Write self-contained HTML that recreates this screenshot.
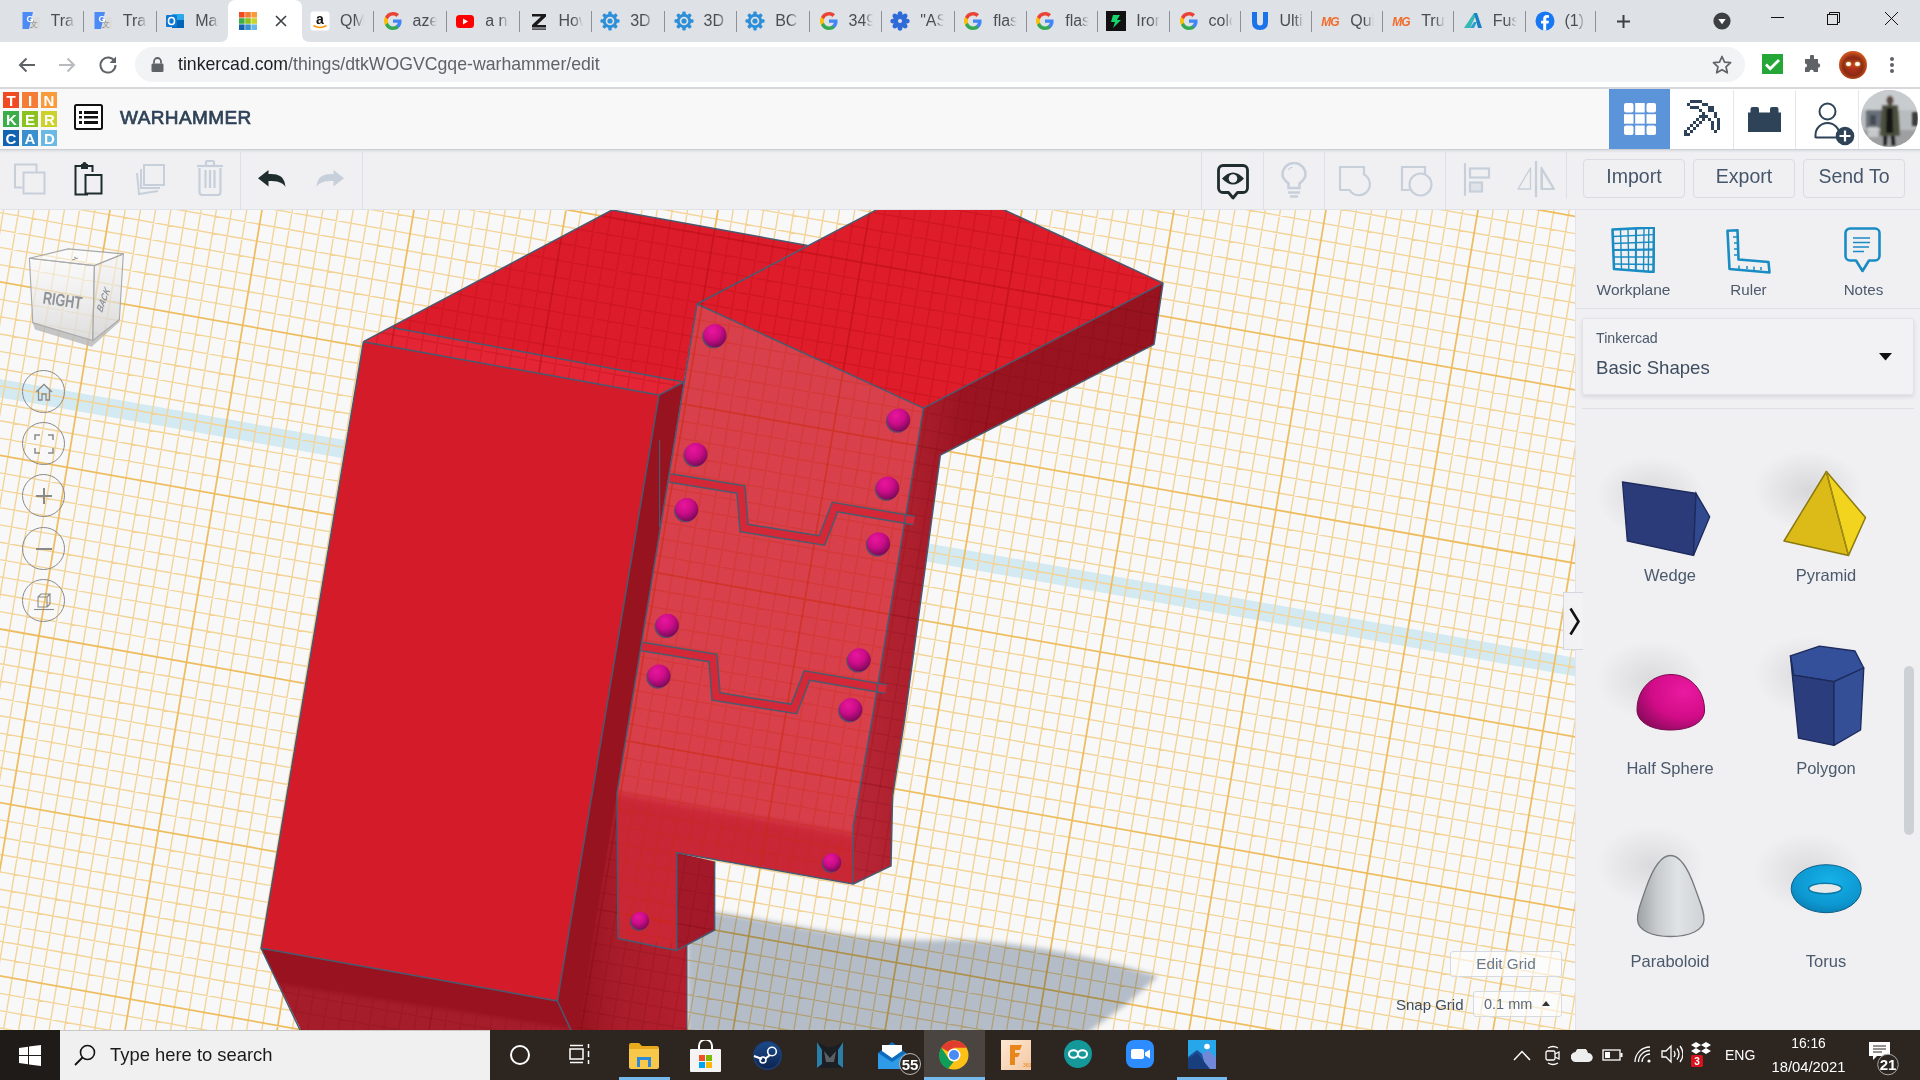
<!DOCTYPE html>
<html><head><meta charset="utf-8">
<style>
*{box-sizing:border-box;margin:0;padding:0}
html,body{width:1920px;height:1080px;overflow:hidden;background:#fff;font-family:"Liberation Sans",sans-serif}
.abs{position:absolute}
svg{display:block}
#tabs{position:absolute;left:0;top:0;width:1920px;height:42px;background:#dee1e6}
#addr{position:absolute;left:0;top:42px;width:1920px;height:45px;background:#fff}
#addrline{position:absolute;left:0;top:87px;width:1920px;height:2px;background:#d6d8dc}
#tch{position:absolute;left:0;top:89px;width:1920px;height:60px;background:#f8f8f8}
#tbar{position:absolute;left:0;top:149px;width:1920px;height:61px;background:#f0f0f3;border-top:1px solid #e1e3e8;border-bottom:1px solid #dfe2e7}
#canvas{position:absolute;left:0;top:210px;width:1575px;height:820px;background:#f8f8f8;overflow:hidden}
#panel{position:absolute;left:1575px;top:210px;width:345px;height:820px;background:#f0f0f3;border-left:1px solid #e2e4e9}
#taskbar{position:absolute;left:0;top:1030px;width:1920px;height:50px;background:#2c2520}
.tabtxt{position:absolute;top:12px;font-size:16px;line-height:18px;color:#4a4e53;white-space:nowrap;overflow:hidden}
.sep{position:absolute;top:11px;width:1px;height:21px;background:#8e9196}
.tsep{position:absolute;top:0;width:1px;height:60px;background:#dde0e6}
.btn{position:absolute;top:9px;height:39px;width:102px;border:1px solid #d9dce2;border-radius:4px;font-size:19.5px;line-height:33px;text-align:center;color:#46566a}
.plabel{position:absolute;font-size:16.5px;color:#4a596b;text-align:center;white-space:nowrap}
.navc{position:absolute;left:22px;width:43px;height:43px;border:1px solid #8a8a8a;border-radius:50%}
</style></head><body>

<!-- ============ CHROME TAB STRIP ============ -->
<div id="tabs">
<div class="abs" style="left:20.5px;top:11px;width:20px;height:20px"><svg width="20" height="20" viewBox="0 0 20 20"><rect x="7" y="6" width="12" height="12" rx="1.5" fill="#dcdcdc"/><text x="13" y="16" font-size="8" fill="#888" text-anchor="middle" font-family="Liberation Sans">文</text><path d="M1.5 1h10.5l-4 17H1.5z" fill="#4c8bf5"/><text x="5.5" y="11" font-size="9" font-weight="bold" fill="#fff" font-family="Liberation Sans">G</text></svg></div>
<div class="tabtxt" style="left:50.5px;width:24px;-webkit-mask-image:linear-gradient(90deg,#000 60%,transparent)">Tracker</div>
<div class="abs" style="left:92.8px;top:11px;width:20px;height:20px"><svg width="20" height="20" viewBox="0 0 20 20"><rect x="7" y="6" width="12" height="12" rx="1.5" fill="#dcdcdc"/><text x="13" y="16" font-size="8" fill="#888" text-anchor="middle" font-family="Liberation Sans">文</text><path d="M1.5 1h10.5l-4 17H1.5z" fill="#4c8bf5"/><text x="5.5" y="11" font-size="9" font-weight="bold" fill="#fff" font-family="Liberation Sans">G</text></svg></div>
<div class="tabtxt" style="left:122.8px;width:24px;-webkit-mask-image:linear-gradient(90deg,#000 60%,transparent)">Tracker</div>
<div class="abs" style="left:165.2px;top:11px;width:20px;height:20px"><svg width="20" height="20" viewBox="0 0 20 20"><rect x="7" y="3" width="12" height="14" rx="1" fill="#28a8ea"/><rect x="7" y="9" width="12" height="8" fill="#0364b8"/><rect x="1" y="4" width="11" height="12" rx="1" fill="#0f78d4"/><ellipse cx="6.5" cy="10" rx="3" ry="3.5" fill="none" stroke="#fff" stroke-width="1.6"/></svg></div>
<div class="tabtxt" style="left:195.2px;width:24px;-webkit-mask-image:linear-gradient(90deg,#000 60%,transparent)">Mail</div>
<div class="abs" style="left:310.1px;top:11px;width:20px;height:20px"><svg width="20" height="20" viewBox="0 0 20 20"><rect x="0.5" y="0.5" width="19" height="19" rx="3" fill="#fff"/><text x="10" y="13" font-size="14" font-weight="bold" text-anchor="middle" fill="#111" font-family="Liberation Sans">a</text><path d="M3.5 14.5q6.5 4 13 0" stroke="#f90" stroke-width="1.6" fill="none"/></svg></div>
<div class="tabtxt" style="left:340.1px;width:24px;-webkit-mask-image:linear-gradient(90deg,#000 60%,transparent)">QMK</div>
<div class="abs" style="left:382.5px;top:11px;width:20px;height:20px"><svg width="20" height="20" viewBox="0 0 20 20"><path d="M18.6 10.2c0-.6-.1-1.2-.2-1.8H10v3.4h4.8a4.1 4.1 0 0 1-1.8 2.7v2.2h2.9c1.7-1.6 2.7-3.9 2.7-6.5z" fill="#4285f4"/><path d="M10 19c2.4 0 4.5-.8 5.9-2.2L13 14.5c-.8.5-1.8.9-3 .9-2.3 0-4.3-1.6-5-3.7H2v2.3A9 9 0 0 0 10 19z" fill="#34a853"/><path d="M5 11.7a5.4 5.4 0 0 1 0-3.4V6H2a9 9 0 0 0 0 8z" fill="#fbbc05"/><path d="M10 4.6c1.3 0 2.5.5 3.4 1.3l2.6-2.6A9 9 0 0 0 2 6l3 2.3c.7-2.1 2.7-3.7 5-3.7z" fill="#ea4335"/></svg></div>
<div class="tabtxt" style="left:412.5px;width:24px;-webkit-mask-image:linear-gradient(90deg,#000 60%,transparent)">azerty</div>
<div class="abs" style="left:455.2px;top:11px;width:20px;height:20px"><svg width="20" height="20" viewBox="0 0 20 20"><rect x="1" y="4" width="18" height="13" rx="3.5" fill="#f00"/><path d="M8 7.5v6l5-3z" fill="#fff"/></svg></div>
<div class="tabtxt" style="left:485.2px;width:24px;-webkit-mask-image:linear-gradient(90deg,#000 60%,transparent)">a nice</div>
<div class="abs" style="left:528.5px;top:11px;width:20px;height:20px"><svg width="20" height="20" viewBox="0 0 20 20"><path d="M3 3h14v2.5L8 14h9v2.5H3V14l9-8.5H3z" fill="#1a1a1a"/><rect x="3" y="17.5" width="14" height="1.2" fill="#1a1a1a"/></svg></div>
<div class="tabtxt" style="left:558.5px;width:24px;-webkit-mask-image:linear-gradient(90deg,#000 60%,transparent)">How</div>
<div class="abs" style="left:600.2px;top:11px;width:20px;height:20px"><svg width="20" height="20" viewBox="0 0 20 20"><g fill="#2d8fd8"><circle cx="10" cy="10" r="7.2"/><rect x="8.3" y="0.5" width="3.4" height="19" rx="1"/><rect x="0.5" y="8.3" width="19" height="3.4" rx="1"/><rect x="8.3" y="0.5" width="3.4" height="19" rx="1" transform="rotate(45 10 10)"/><rect x="8.3" y="0.5" width="3.4" height="19" rx="1" transform="rotate(-45 10 10)"/></g><circle cx="10" cy="10" r="4.3" fill="#dee1e6"/><circle cx="10" cy="10" r="2.6" fill="#2d8fd8"/></svg></div>
<div class="tabtxt" style="left:630.2px;width:24px;-webkit-mask-image:linear-gradient(90deg,#000 60%,transparent)">3D</div>
<div class="abs" style="left:673.5px;top:11px;width:20px;height:20px"><svg width="20" height="20" viewBox="0 0 20 20"><g fill="#2d8fd8"><circle cx="10" cy="10" r="7.2"/><rect x="8.3" y="0.5" width="3.4" height="19" rx="1"/><rect x="0.5" y="8.3" width="19" height="3.4" rx="1"/><rect x="8.3" y="0.5" width="3.4" height="19" rx="1" transform="rotate(45 10 10)"/><rect x="8.3" y="0.5" width="3.4" height="19" rx="1" transform="rotate(-45 10 10)"/></g><circle cx="10" cy="10" r="4.3" fill="#dee1e6"/><circle cx="10" cy="10" r="2.6" fill="#2d8fd8"/></svg></div>
<div class="tabtxt" style="left:703.5px;width:24px;-webkit-mask-image:linear-gradient(90deg,#000 60%,transparent)">3D</div>
<div class="abs" style="left:745.2px;top:11px;width:20px;height:20px"><svg width="20" height="20" viewBox="0 0 20 20"><g fill="#2d8fd8"><circle cx="10" cy="10" r="7.2"/><rect x="8.3" y="0.5" width="3.4" height="19" rx="1"/><rect x="0.5" y="8.3" width="19" height="3.4" rx="1"/><rect x="8.3" y="0.5" width="3.4" height="19" rx="1" transform="rotate(45 10 10)"/><rect x="8.3" y="0.5" width="3.4" height="19" rx="1" transform="rotate(-45 10 10)"/></g><circle cx="10" cy="10" r="4.3" fill="#dee1e6"/><circle cx="10" cy="10" r="2.6" fill="#2d8fd8"/></svg></div>
<div class="tabtxt" style="left:775.2px;width:24px;-webkit-mask-image:linear-gradient(90deg,#000 60%,transparent)">BCN</div>
<div class="abs" style="left:818.5px;top:11px;width:20px;height:20px"><svg width="20" height="20" viewBox="0 0 20 20"><path d="M18.6 10.2c0-.6-.1-1.2-.2-1.8H10v3.4h4.8a4.1 4.1 0 0 1-1.8 2.7v2.2h2.9c1.7-1.6 2.7-3.9 2.7-6.5z" fill="#4285f4"/><path d="M10 19c2.4 0 4.5-.8 5.9-2.2L13 14.5c-.8.5-1.8.9-3 .9-2.3 0-4.3-1.6-5-3.7H2v2.3A9 9 0 0 0 10 19z" fill="#34a853"/><path d="M5 11.7a5.4 5.4 0 0 1 0-3.4V6H2a9 9 0 0 0 0 8z" fill="#fbbc05"/><path d="M10 4.6c1.3 0 2.5.5 3.4 1.3l2.6-2.6A9 9 0 0 0 2 6l3 2.3c.7-2.1 2.7-3.7 5-3.7z" fill="#ea4335"/></svg></div>
<div class="tabtxt" style="left:848.5px;width:24px;-webkit-mask-image:linear-gradient(90deg,#000 60%,transparent)">349</div>
<div class="abs" style="left:890.2px;top:11px;width:20px;height:20px"><svg width="20" height="20" viewBox="0 0 20 20"><g fill="#2f6bd8"><ellipse cx="10" cy="4.5" rx="2.6" ry="4.2" transform="rotate(0 10 10)"/><ellipse cx="10" cy="4.5" rx="2.6" ry="4.2" transform="rotate(45 10 10)"/><ellipse cx="10" cy="4.5" rx="2.6" ry="4.2" transform="rotate(90 10 10)"/><ellipse cx="10" cy="4.5" rx="2.6" ry="4.2" transform="rotate(135 10 10)"/><ellipse cx="10" cy="4.5" rx="2.6" ry="4.2" transform="rotate(180 10 10)"/><ellipse cx="10" cy="4.5" rx="2.6" ry="4.2" transform="rotate(225 10 10)"/><ellipse cx="10" cy="4.5" rx="2.6" ry="4.2" transform="rotate(270 10 10)"/><ellipse cx="10" cy="4.5" rx="2.6" ry="4.2" transform="rotate(315 10 10)"/></g><circle cx="10" cy="10" r="2" fill="#dee1e6"/></svg></div>
<div class="tabtxt" style="left:920.2px;width:24px;-webkit-mask-image:linear-gradient(90deg,#000 60%,transparent)">"ASK</div>
<div class="abs" style="left:963.2px;top:11px;width:20px;height:20px"><svg width="20" height="20" viewBox="0 0 20 20"><path d="M18.6 10.2c0-.6-.1-1.2-.2-1.8H10v3.4h4.8a4.1 4.1 0 0 1-1.8 2.7v2.2h2.9c1.7-1.6 2.7-3.9 2.7-6.5z" fill="#4285f4"/><path d="M10 19c2.4 0 4.5-.8 5.9-2.2L13 14.5c-.8.5-1.8.9-3 .9-2.3 0-4.3-1.6-5-3.7H2v2.3A9 9 0 0 0 10 19z" fill="#34a853"/><path d="M5 11.7a5.4 5.4 0 0 1 0-3.4V6H2a9 9 0 0 0 0 8z" fill="#fbbc05"/><path d="M10 4.6c1.3 0 2.5.5 3.4 1.3l2.6-2.6A9 9 0 0 0 2 6l3 2.3c.7-2.1 2.7-3.7 5-3.7z" fill="#ea4335"/></svg></div>
<div class="tabtxt" style="left:993.2px;width:24px;-webkit-mask-image:linear-gradient(90deg,#000 60%,transparent)">flash</div>
<div class="abs" style="left:1035.2px;top:11px;width:20px;height:20px"><svg width="20" height="20" viewBox="0 0 20 20"><path d="M18.6 10.2c0-.6-.1-1.2-.2-1.8H10v3.4h4.8a4.1 4.1 0 0 1-1.8 2.7v2.2h2.9c1.7-1.6 2.7-3.9 2.7-6.5z" fill="#4285f4"/><path d="M10 19c2.4 0 4.5-.8 5.9-2.2L13 14.5c-.8.5-1.8.9-3 .9-2.3 0-4.3-1.6-5-3.7H2v2.3A9 9 0 0 0 10 19z" fill="#34a853"/><path d="M5 11.7a5.4 5.4 0 0 1 0-3.4V6H2a9 9 0 0 0 0 8z" fill="#fbbc05"/><path d="M10 4.6c1.3 0 2.5.5 3.4 1.3l2.6-2.6A9 9 0 0 0 2 6l3 2.3c.7-2.1 2.7-3.7 5-3.7z" fill="#ea4335"/></svg></div>
<div class="tabtxt" style="left:1065.2px;width:24px;-webkit-mask-image:linear-gradient(90deg,#000 60%,transparent)">flash</div>
<div class="abs" style="left:1106.2px;top:11px;width:20px;height:20px"><svg width="20" height="20" viewBox="0 0 20 20"><rect x="0" y="0" width="20" height="20" fill="#111"/><path d="M7 4h7l-3 5h4l-8 8 2-6H5z" fill="#17d46b"/></svg></div>
<div class="tabtxt" style="left:1136.2px;width:24px;-webkit-mask-image:linear-gradient(90deg,#000 60%,transparent)">Iron</div>
<div class="abs" style="left:1178.5px;top:11px;width:20px;height:20px"><svg width="20" height="20" viewBox="0 0 20 20"><path d="M18.6 10.2c0-.6-.1-1.2-.2-1.8H10v3.4h4.8a4.1 4.1 0 0 1-1.8 2.7v2.2h2.9c1.7-1.6 2.7-3.9 2.7-6.5z" fill="#4285f4"/><path d="M10 19c2.4 0 4.5-.8 5.9-2.2L13 14.5c-.8.5-1.8.9-3 .9-2.3 0-4.3-1.6-5-3.7H2v2.3A9 9 0 0 0 10 19z" fill="#34a853"/><path d="M5 11.7a5.4 5.4 0 0 1 0-3.4V6H2a9 9 0 0 0 0 8z" fill="#fbbc05"/><path d="M10 4.6c1.3 0 2.5.5 3.4 1.3l2.6-2.6A9 9 0 0 0 2 6l3 2.3c.7-2.1 2.7-3.7 5-3.7z" fill="#ea4335"/></svg></div>
<div class="tabtxt" style="left:1208.5px;width:24px;-webkit-mask-image:linear-gradient(90deg,#000 60%,transparent)">color</div>
<div class="abs" style="left:1249.5px;top:11px;width:20px;height:20px"><svg width="20" height="20" viewBox="0 0 20 20"><path d="M2 1h5v10q0 3.5 3 3.5t3-3.5V1h5v10q0 8-8 8t-8-8z" fill="#1a73e8"/></svg></div>
<div class="tabtxt" style="left:1279.5px;width:24px;-webkit-mask-image:linear-gradient(90deg,#000 60%,transparent)">Ultim</div>
<div class="abs" style="left:1320.2px;top:11px;width:20px;height:20px"><svg width="20" height="20" viewBox="0 0 20 20"><text x="10" y="15" font-size="12" font-weight="bold" font-style="italic" text-anchor="middle" fill="#f26c2a" font-family="Liberation Sans" letter-spacing="-1">MG</text></svg></div>
<div class="tabtxt" style="left:1350.2px;width:24px;-webkit-mask-image:linear-gradient(90deg,#000 60%,transparent)">Quick</div>
<div class="abs" style="left:1391.2px;top:11px;width:20px;height:20px"><svg width="20" height="20" viewBox="0 0 20 20"><text x="10" y="15" font-size="12" font-weight="bold" font-style="italic" text-anchor="middle" fill="#f26c2a" font-family="Liberation Sans" letter-spacing="-1">MG</text></svg></div>
<div class="tabtxt" style="left:1421.2px;width:24px;-webkit-mask-image:linear-gradient(90deg,#000 60%,transparent)">True</div>
<div class="abs" style="left:1462.8px;top:11px;width:20px;height:20px"><svg width="20" height="20" viewBox="0 0 20 20"><path d="M1 17L11 2h3L7 17z" fill="#36b8b4"/><path d="M11 2h3l5 15h-4z" fill="#1b7fc4"/><path d="M7 17l4-6h3l-3 6z" fill="#2aa0d0"/></svg></div>
<div class="tabtxt" style="left:1492.8px;width:24px;-webkit-mask-image:linear-gradient(90deg,#000 60%,transparent)">Fusion</div>
<div class="abs" style="left:1534.5px;top:11px;width:20px;height:20px"><svg width="20" height="20" viewBox="0 0 20 20"><circle cx="10" cy="10" r="9.5" fill="#1877f2"/><path d="M11.2 19.5v-7h2.3l.4-2.8h-2.7V8c0-.8.3-1.3 1.4-1.3H14V4.2a18 18 0 0 0-2.2-.1c-2.2 0-3.6 1.3-3.6 3.7v1.9H6v2.8h2.2v7z" fill="#fff"/></svg></div>
<div class="tabtxt" style="left:1564.5px;width:20px;-webkit-mask-image:linear-gradient(90deg,#000 60%,transparent)">(1) Fa</div>
<div class="sep" style="left:83.3px"></div>
<div class="sep" style="left:155.7px"></div>
<div class="sep" style="left:373.0px"></div>
<div class="sep" style="left:445.7px"></div>
<div class="sep" style="left:519.0px"></div>
<div class="sep" style="left:590.7px"></div>
<div class="sep" style="left:664.0px"></div>
<div class="sep" style="left:735.7px"></div>
<div class="sep" style="left:809.0px"></div>
<div class="sep" style="left:880.7px"></div>
<div class="sep" style="left:953.7px"></div>
<div class="sep" style="left:1025.7px"></div>
<div class="sep" style="left:1096.7px"></div>
<div class="sep" style="left:1169.0px"></div>
<div class="sep" style="left:1240.0px"></div>
<div class="sep" style="left:1310.7px"></div>
<div class="sep" style="left:1381.7px"></div>
<div class="sep" style="left:1453.3px"></div>
<div class="sep" style="left:1525.0px"></div>
<div class="sep" style="left:1595.3px"></div>
<svg class="abs" style="left:220px;top:0" width="90" height="42" viewBox="0 0 90 42"><path d="M0 42q8 0 8-8V8q0-8 8-8h58q8 0 8 8v26q0 8 8 8z" fill="#fff"/></svg>
<div class="abs" style="left:238px;top:11px;width:20px;height:20px"><svg width="20" height="20" viewBox="0 0 20 20"><rect x="1.0" y="1.0" width="5.6" height="5.6" fill="#f04a23"/><rect x="7.2" y="1.0" width="5.6" height="5.6" fill="#f57c35"/><rect x="13.4" y="1.0" width="5.6" height="5.6" fill="#f99a3b"/><rect x="1.0" y="7.2" width="5.6" height="5.6" fill="#3cae49"/><rect x="7.2" y="7.2" width="5.6" height="5.6" fill="#8cc21f"/><rect x="13.4" y="7.2" width="5.6" height="5.6" fill="#ccd22b"/><rect x="1.0" y="13.4" width="5.6" height="5.6" fill="#1162b0"/><rect x="7.2" y="13.4" width="5.6" height="5.6" fill="#3a8fcf"/><rect x="13.4" y="13.4" width="5.6" height="5.6" fill="#6ab9e5"/></svg></div>
<svg class="abs" style="left:275px;top:15px" width="12" height="12" viewBox="0 0 12 12"><path d="M1 1l10 10M11 1L1 11" stroke="#3c4043" stroke-width="1.6"/></svg>
<svg class="abs" style="left:1616px;top:14px" width="15" height="15" viewBox="0 0 15 15"><path d="M7.5 1v13M1 7.5h13" stroke="#3c4043" stroke-width="2"/></svg>
<svg class="abs" style="left:1713px;top:12px" width="18" height="18" viewBox="0 0 18 18"><circle cx="9" cy="9" r="8.6" fill="#3c4043"/><path d="M5.3 7h7.4L9 12.2z" fill="#fff"/></svg>
<div class="abs" style="left:1771px;top:17px;width:13px;height:1px;background:#111"></div>
<svg class="abs" style="left:1826px;top:11px" width="15" height="15" viewBox="0 0 15 15"><path d="M3.5 3.5V1.5h10v10h-2" stroke="#111" fill="none" stroke-width="1"/><rect x="1.5" y="3.5" width="10" height="10" stroke="#111" fill="none" stroke-width="1"/></svg>
<svg class="abs" style="left:1884px;top:11px" width="15" height="15" viewBox="0 0 15 15"><path d="M1 1l13 13M14 1L1 14" stroke="#111" stroke-width="1"/></svg>
</div>

<!-- ============ ADDRESS BAR ============ -->
<div id="addr">
<svg class="abs" style="left:17px;top:13px" width="20" height="20" viewBox="0 0 20 20"><path d="M18 10H3M9.5 3.5L3 10l6.5 6.5" stroke="#5f6368" stroke-width="2" fill="none"/></svg>
<svg class="abs" style="left:57px;top:13px" width="20" height="20" viewBox="0 0 20 20"><path d="M2 10h15M10.5 3.5L17 10l-6.5 6.5" stroke="#b7babe" stroke-width="2" fill="none"/></svg>
<svg class="abs" style="left:97px;top:12px" width="22" height="22" viewBox="0 0 22 22"><path d="M17.6 7.5A7.5 7.5 0 1 0 18.5 11" stroke="#5f6368" stroke-width="2" fill="none"/><path d="M19 2.5v6.5h-6.5z" fill="#5f6368"/></svg>
<div class="abs" style="left:135px;top:5px;width:1610px;height:35px;border-radius:17.5px;background:#f1f3f4"></div>
<svg class="abs" style="left:151px;top:15px" width="13" height="15" viewBox="0 0 13 15"><path d="M3 6.5V4.5a3.5 3.5 0 0 1 7 0v2" stroke="#5f6368" stroke-width="1.8" fill="none"/><rect x="0.5" y="6.5" width="12" height="8.5" rx="1.3" fill="#5f6368"/></svg>
<div class="abs" style="left:178px;top:11px;font-size:17.7px;line-height:22px;color:#202124;white-space:nowrap">tinkercad.com<span style="color:#5f6368">/things/dtkWOGVCgqe-warhammer/edit</span></div>
<svg class="abs" style="left:1712px;top:13px" width="20" height="19" viewBox="0 0 20 19"><path d="M10 1.5l2.5 5.6 6.1.6-4.6 4.1 1.3 6-5.3-3.1-5.3 3.1 1.3-6L1.4 7.7l6.1-.6z" stroke="#5f6368" stroke-width="1.7" fill="none" stroke-linejoin="round"/></svg>
<div class="abs" style="left:1762px;top:12px;width:21px;height:20px;background:#25a738"></div>
<svg class="abs" style="left:1762px;top:12px" width="21" height="20" viewBox="0 0 21 20"><path d="M4 10.5l4.2 4.2L17 6" stroke="#fff" stroke-width="2.8" fill="none"/></svg>
<svg class="abs" style="left:1803px;top:13px" width="19" height="19" viewBox="0 0 19 19"><path d="M7 1.5a2 2 0 0 1 4 0V4h4v4.3a2.2 2.2 0 1 1 0 4.4V17h-4.2a2.2 2.2 0 1 0-4.4 0H2v-4.5a2 2 0 1 0 0-4V4h5z" fill="#5f6368"/></svg>
<div class="abs" style="left:1839px;top:9px;width:28px;height:28px;border-radius:50%;background:radial-gradient(circle at 50% 55%,#c2321a 0%,#8a2a14 45%,#d0561e 70%,#6a2010 100%)"></div>
<div class="abs" style="left:1846px;top:20px;width:5px;height:4px;border-radius:50%;background:#fff;box-shadow:0 0 3px #ff5"></div>
<div class="abs" style="left:1855px;top:20px;width:5px;height:4px;border-radius:50%;background:#fff;box-shadow:0 0 3px #ff5"></div>
<div class="abs" style="left:1890px;top:15px;width:4px;height:4px;border-radius:50%;background:#5f6368;box-shadow:0 6px 0 #5f6368,0 12px 0 #5f6368"></div>
</div>
<div id="addrline"></div>

<!-- ============ TINKERCAD HEADER ============ -->
<div id="tch">
<svg class="abs" style="left:3px;top:3px" width="54" height="54" viewBox="0 0 54 54">
<rect x="0" y="0" width="16" height="16" fill="#f04a23"/><rect x="19" y="0" width="16" height="16" fill="#f57c35"/><rect x="38" y="0" width="16" height="16" fill="#f99a3b"/>
<rect x="0" y="19" width="16" height="16" fill="#3cae49"/><rect x="19" y="19" width="16" height="16" fill="#8cc21f"/><rect x="38" y="19" width="16" height="16" fill="#ccd22b"/>
<rect x="0" y="38" width="16" height="16" fill="#1162b0"/><rect x="19" y="38" width="16" height="16" fill="#3a8fcf"/><rect x="38" y="38" width="16" height="16" fill="#6ab9e5"/>
<g font-family="Liberation Sans" font-weight="bold" font-size="15" fill="#fff" text-anchor="middle">
<text x="8" y="13.5">T</text><text x="27" y="13.5">I</text><text x="46" y="13.5">N</text>
<text x="8.3" y="32.5">K</text><text x="27" y="32.5">E</text><text x="46.3" y="32.5">R</text>
<text x="8" y="51.5">C</text><text x="27" y="51.5">A</text><text x="46.3" y="51.5">D</text></g></svg>
<svg class="abs" style="left:74px;top:15px" width="29" height="26" viewBox="0 0 29 26"><rect x="1" y="1" width="27" height="24" rx="1.5" stroke="#111" stroke-width="2" fill="#fff"/><g fill="#111"><rect x="5" y="7" width="3" height="3"/><rect x="10" y="7" width="14" height="3"/><rect x="5" y="12" width="3" height="2.5"/><rect x="10" y="12" width="14" height="2.5"/><rect x="5" y="17" width="3" height="3"/><rect x="10" y="17" width="14" height="3"/></g></svg>
<div class="abs" style="left:120px;top:17px;font-size:19px;line-height:24px;font-weight:normal;letter-spacing:0.4px;color:#2f4257;-webkit-text-stroke:0.7px #2f4257">WARHAMMER</div>
<div class="abs" style="left:1609px;top:0;width:311px;height:60px;background:#fff"></div>
<div class="abs" style="left:1609px;top:0;width:61px;height:60px;background:#5b94d9"></div>
<svg class="abs" style="left:1624px;top:14px" width="32" height="32" viewBox="0 0 32 32"><g fill="#fff"><rect x="0" y="0" width="9.5" height="9.5" rx="2"/><rect x="11.2" y="0" width="9.5" height="9.5"/><rect x="22.5" y="0" width="9.5" height="9.5" rx="2"/><rect x="0" y="11.2" width="9.5" height="9.5"/><rect x="11.2" y="11.2" width="9.5" height="9.5"/><rect x="22.5" y="11.2" width="9.5" height="9.5"/><rect x="0" y="22.5" width="9.5" height="9.5" rx="2"/><rect x="11.2" y="22.5" width="9.5" height="9.5"/><rect x="22.5" y="22.5" width="9.5" height="9.5" rx="2"/></g></svg>
<svg class="abs" style="left:1683.6px;top:11.4px" width="36" height="36" viewBox="0 0 36 36"><g fill="#2f4358"><rect x="6" y="0" width="3" height="3"/><rect x="9" y="0" width="3" height="3"/><rect x="12" y="0" width="3" height="3"/><rect x="15" y="0" width="3" height="3"/><rect x="3" y="3" width="3" height="3"/><rect x="18" y="3" width="3" height="3"/><rect x="21" y="3" width="3" height="3"/><rect x="6" y="6" width="3" height="3"/><rect x="9" y="6" width="3" height="3"/><rect x="12" y="6" width="3" height="3"/><rect x="24" y="6" width="3" height="3"/><rect x="27" y="6" width="3" height="3"/><rect x="15" y="9" width="3" height="3"/><rect x="24" y="9" width="3" height="3"/><rect x="27" y="9" width="3" height="3"/><rect x="18" y="12" width="3" height="3"/><rect x="30" y="12" width="3" height="3"/><rect x="15" y="15" width="3" height="3"/><rect x="18" y="15" width="3" height="3"/><rect x="21" y="15" width="3" height="3"/><rect x="30" y="15" width="3" height="3"/><rect x="12" y="18" width="3" height="3"/><rect x="18" y="18" width="3" height="3"/><rect x="24" y="18" width="3" height="3"/><rect x="33" y="18" width="3" height="3"/><rect x="9" y="21" width="3" height="3"/><rect x="15" y="21" width="3" height="3"/><rect x="27" y="21" width="3" height="3"/><rect x="33" y="21" width="3" height="3"/><rect x="6" y="24" width="3" height="3"/><rect x="12" y="24" width="3" height="3"/><rect x="27" y="24" width="3" height="3"/><rect x="33" y="24" width="3" height="3"/><rect x="3" y="27" width="3" height="3"/><rect x="9" y="27" width="3" height="3"/><rect x="27" y="27" width="3" height="3"/><rect x="33" y="27" width="3" height="3"/><rect x="0" y="30" width="3" height="3"/><rect x="6" y="30" width="3" height="3"/><rect x="30" y="30" width="3" height="3"/><rect x="0" y="33" width="3" height="3"/><rect x="3" y="33" width="3" height="3"/></g></svg>
<div class="abs" style="left:1733px;top:1px;width:1px;height:59px;background:#e4e6ea"></div>
<svg class="abs" style="left:1748px;top:106.5px;top:17.5px" width="33" height="25" viewBox="0 0 33 25"><path d="M0 5.5h2.5V2a2 2 0 0 1 2-2h4.5a2 2 0 0 1 2 2v3.5h11V2a2 2 0 0 1 2-2h4.5a2 2 0 0 1 2 2v3.5H33V25H0z" fill="#2f4358"/></svg>
<div class="abs" style="left:1795px;top:1px;width:1px;height:59px;background:#e4e6ea"></div>
<svg class="abs" style="left:1814px;top:13px" width="42" height="45" viewBox="0 0 42 45"><circle cx="13.5" cy="9.5" r="8" stroke="#2f4358" stroke-width="2" fill="none"/><path d="M1.5 36v-3a12 12 0 0 1 24 0" stroke="#2f4358" stroke-width="2" fill="none"/><path d="M1.5 35.5h22" stroke="#2f4358" stroke-width="2"/><circle cx="31" cy="34" r="9.3" fill="#2f4358"/><path d="M31 28.5v11M25.5 34h11" stroke="#fff" stroke-width="2.2"/></svg>
<div class="abs" style="left:1858px;top:1px;width:1px;height:59px;background:#e4e6ea"></div>
<svg class="abs" style="left:1861px;top:1px" width="57" height="57" viewBox="1861 90 57 57"><defs><clipPath id="avc"><circle cx="1889.5" cy="118.5" r="28.5"/></clipPath><filter id="avb"><feGaussianBlur stdDeviation="0.9"/></filter></defs>
<g clip-path="url(#avc)"><rect x="1861" y="90" width="57" height="57" fill="#b9bcbf"/>
<g filter="url(#avb)"><rect x="1861" y="90" width="57" height="20" fill="#c9ccce"/><rect x="1861" y="130" width="57" height="17" fill="#9d9fa1"/>
<rect x="1866" y="110" width="18" height="18" fill="#6a7078"/><rect x="1870" y="115" width="6" height="10" fill="#454b55"/><rect x="1868" y="127" width="10" height="10" fill="#d8dadc" opacity=".7"/>
<rect x="1912" y="112" width="6" height="14" fill="#3a3a3a"/>
<ellipse cx="1890" cy="100.5" rx="3.6" ry="4.8" fill="#5a4a42"/>
<path d="M1882 105h16l2 31h-20z" fill="#4c503c"/><path d="M1886.5 108h6l.8 25h-7.5z" fill="#141414"/>
<path d="M1883 136h4.5l-.5 10h-4zM1890.5 136h4.5l.5 10h-4z" fill="#151515"/></g></g></svg>
</div>

<!-- ============ TOOLBAR ============ -->
<div id="tbar">
<div class="abs" style="left:0;top:-1px;width:1920px;height:4px;background:linear-gradient(rgba(40,50,70,.13),rgba(40,50,70,0))"></div>
<svg class="abs" style="left:14px;top:13px" width="32" height="32" viewBox="0 0 32 32"><g stroke="#c7d0da" stroke-width="2" fill="none"><path d="M8.5 24.5H1V1.5h21.5V9"/><rect x="9.5" y="9.5" width="21" height="21"/></g></svg>
<svg class="abs" style="left:74px;top:12px" width="29" height="34" viewBox="0 0 29 34"><g stroke="#1f2d2f" stroke-width="2" fill="none"><path d="M12 32.5H1.5V4h5.5"/><path d="M13.5 4h5v6"/><rect x="11.5" y="13" width="16" height="18.5"/><path d="M12 32.5h2"/></g><path d="M7 2h7v5H7z" fill="#1f2d2f"/><circle cx="10.5" cy="2.2" r="2.2" fill="#1f2d2f"/></svg>
<svg class="abs" style="left:133px;top:12px" width="34" height="35" viewBox="0 0 34 35"><g stroke="#c7d0da" stroke-width="2" fill="none"><rect x="11" y="3" width="20" height="20"/><path d="M8 7v19h19"/><path d="M4 11l2 21 19-3"/></g></svg>
<svg class="abs" style="left:196px;top:10px" width="28" height="36" viewBox="0 0 28 36"><g stroke="#c7d0da" stroke-width="2.2" fill="none"><path d="M1 6h26"/><path d="M10 5V2.5a1.5 1.5 0 0 1 1.5-1.5h5a1.5 1.5 0 0 1 1.5 1.5V5"/><path d="M3.5 8v24a3 3 0 0 0 3 3h15a3 3 0 0 0 3-3V8"/><path d="M9.5 10v18M14 10v18M18.5 10v18"/></g></svg>
<div class="tsep" style="left:240px"></div>
<svg class="abs" style="left:258px;top:20px" width="28" height="17" viewBox="0 0 28 17"><path d="M10.5 0v4c9 0 16 1 17 13-3-5-8-6-17-6v5.5L0 8.2z" fill="#1f2d2f"/></svg>
<svg class="abs" style="left:316px;top:20px" width="28" height="17" viewBox="0 0 28 17"><path d="M17.5 0v4C8.5 4 1.5 5 .5 17c3-5 8-6 17-6v5.5L28 8.2z" fill="#c7d0da"/></svg>
<div class="tsep" style="left:362px"></div>
<div class="tsep" style="left:1201px"></div>
<svg class="abs" style="left:1217px;top:14px" width="32" height="36" viewBox="0 0 32 36"><path d="M6 1.5h20a4.5 4.5 0 0 1 4.5 4.5v18a4.5 4.5 0 0 1-4.5 4.5h-5.5L16 34l-4.5-5.5H6A4.5 4.5 0 0 1 1.5 24V6A4.5 4.5 0 0 1 6 1.5z" stroke="#1f2d2f" stroke-width="2.8" fill="none" stroke-linejoin="round"/><path d="M5 14.5q11-12 22 0q-11 12-22 0z" fill="#1f2d2f"/><circle cx="16" cy="14.5" r="4.3" fill="#f0f0f3"/></svg>
<div class="tsep" style="left:1263px"></div>
<svg class="abs" style="left:1280px;top:12px" width="28" height="38" viewBox="-1 -1 28 38"><g stroke="#c7d0da" stroke-width="2.6" fill="none"><path d="M7.5 25v-4.5C3 17 1.5 14 1.5 11.5a11.5 11.5 0 0 1 23 0c0 2.5-1.5 5.5-6 9V25z"/><path d="M7 29.5h12M9 33.5h8"/><path d="M7 7q2-2.5 4.5-2.8" stroke-width="1.2"/></g></svg>
<div class="tsep" style="left:1324px"></div>
<svg class="abs" style="left:1338px;top:15px" width="34" height="33" viewBox="0 0 34 33"><path d="M2 2h24v7.5a11 11 0 1 1-14.5 15.5H2z" stroke="#c7d0da" stroke-width="2.2" fill="none" stroke-linejoin="round"/></svg>
<svg class="abs" style="left:1400px;top:15px" width="34" height="33" viewBox="0 0 34 33"><g stroke="#c7d0da" stroke-width="2.2" fill="none"><path d="M9.5 25H2V2h23v7"/><circle cx="20.5" cy="19.5" r="11"/></g></svg>
<div class="tsep" style="left:1445px"></div>
<svg class="abs" style="left:1463px;top:12px" width="28" height="35" viewBox="0 0 28 35"><g stroke="#c7d0da" fill="none"><path d="M2 2v31" stroke-width="2.2" stroke-linecap="round"/><rect x="7" y="6.5" width="19" height="9" stroke-width="2.2"/><rect x="7" y="20.5" width="12" height="9" stroke-width="2.2" fill="#dfe3e8"/></g></svg>
<svg class="abs" style="left:1516px;top:10px" width="40" height="38" viewBox="0 0 40 38"><g fill="none" stroke="#c7d0da" stroke-linejoin="round"><path d="M20 2v34" stroke-width="2.4" stroke-linecap="round"/><path d="M14.5 8v21H2z" stroke-width="1.4"/><path d="M25.5 8v21H38z" stroke-width="2.2" fill="#c7d0da"/></g><path d="M27 13v15h9z" fill="#f0f0f3"/></svg>
<div class="tsep" style="left:1566px;height:49px"></div>
<div class="btn" style="left:1583px">Import</div>
<div class="btn" style="left:1693px">Export</div>
<div class="btn" style="left:1803px">Send To</div>
</div>

<!-- ============ CANVAS ============ -->
<div id="canvas">
<svg class="abs" style="left:0;top:0" width="1575" height="820" viewBox="0 210 1575 820">
<defs>
<path id="gmin" d="M-41.9 -246.0L-272.5 1135.5M-27.1 -243.3L-257.8 1138.1M-12.3 -240.7L-243.0 1140.8M2.4 -238.1L-228.3 1143.4M17.2 -235.4L-213.5 1146.0M46.7 -230.1L-184.0 1151.3M61.5 -227.5L-169.2 1153.9M76.2 -224.9L-154.5 1156.6M91.0 -222.2L-139.7 1159.2M105.7 -219.6L-124.9 1161.9M120.5 -217.0L-110.2 1164.5M135.2 -214.3L-95.4 1167.1M150.0 -211.7L-80.7 1169.8M164.8 -209.1L-65.9 1172.4M194.3 -203.8L-36.4 1177.7M209.1 -201.1L-21.6 1180.3M223.8 -198.5L-6.9 1182.9M238.6 -195.9L7.9 1185.6M253.3 -193.2L22.7 1188.2M268.1 -190.6L37.4 1190.9M282.8 -188.0L52.2 1193.5M297.6 -185.3L66.9 1196.1M312.4 -182.7L81.7 1198.8M341.9 -177.4L111.2 1204.0M356.6 -174.8L126.0 1206.7M371.4 -172.2L140.7 1209.3M386.2 -169.5L155.5 1211.9M400.9 -166.9L170.3 1214.6M415.7 -164.2L185.0 1217.2M430.4 -161.6L199.8 1219.8M445.2 -159.0L214.5 1222.5M460.0 -156.3L229.3 1225.1M489.5 -151.1L258.8 1230.4M504.2 -148.4L273.6 1233.0M519.0 -145.8L288.3 1235.7M533.8 -143.2L303.1 1238.3M548.5 -140.5L317.9 1240.9M563.3 -137.9L332.6 1243.6M578.0 -135.2L347.4 1246.2M592.8 -132.6L362.1 1248.8M607.6 -130.0L376.9 1251.5M637.1 -124.7L406.4 1256.8M651.9 -122.1L421.2 1259.4M666.6 -119.4L435.9 1262.0M681.4 -116.8L450.7 1264.7M696.1 -114.2L465.5 1267.3M710.9 -111.5L480.2 1269.9M725.6 -108.9L495.0 1272.6M740.4 -106.3L509.7 1275.2M755.2 -103.6L524.5 1277.8M784.7 -98.3L554.0 1283.1M799.4 -95.7L568.8 1285.7M814.2 -93.1L583.5 1288.4M829.0 -90.4L598.3 1291.0M843.7 -87.8L613.1 1293.7M858.5 -85.2L627.8 1296.3M873.2 -82.5L642.6 1298.9M888.0 -79.9L657.3 1301.6M902.8 -77.3L672.1 1304.2M932.3 -72.0L701.6 1309.5M947.0 -69.3L716.4 1312.1M961.8 -66.7L731.1 1314.7M976.6 -64.1L745.9 1317.4M991.3 -61.4L760.7 1320.0M1006.1 -58.8L775.4 1322.7M1020.8 -56.2L790.2 1325.3M1035.6 -53.5L804.9 1327.9M1050.4 -50.9L819.7 1330.6M1079.9 -45.6L849.2 1335.8M1094.7 -43.0L864.0 1338.5M1109.4 -40.4L878.7 1341.1M1124.2 -37.7L893.5 1343.7M1138.9 -35.1L908.3 1346.4M1153.7 -32.4L923.0 1349.0M1168.5 -29.8L937.8 1351.6M1183.2 -27.2L952.5 1354.3M1198.0 -24.5L967.3 1356.9M1227.5 -19.3L996.8 1362.2M1242.3 -16.6L1011.6 1364.8M1257.0 -14.0L1026.3 1367.5M1271.8 -11.4L1041.1 1370.1M1286.5 -8.7L1055.9 1372.7M1301.3 -6.1L1070.6 1375.4M1316.1 -3.4L1085.4 1378.0M1330.8 -0.8L1100.1 1380.6M1345.6 1.8L1114.9 1383.3M1375.1 7.1L1144.4 1388.6M1389.9 9.7L1159.2 1391.2M1404.6 12.4L1173.9 1393.8M1419.4 15.0L1188.7 1396.5M1434.1 17.6L1203.5 1399.1M1448.9 20.3L1218.2 1401.7M1463.7 22.9L1233.0 1404.4M1478.4 25.5L1247.7 1407.0M1493.2 28.2L1262.5 1409.6M1522.7 33.5L1292.0 1414.9M1537.5 36.1L1306.8 1417.5M1552.2 38.7L1321.5 1420.2M1567.0 41.4L1336.3 1422.8M1581.7 44.0L1351.1 1425.5M1596.5 46.6L1365.8 1428.1M1611.3 49.3L1380.6 1430.7M1626.0 51.9L1395.3 1433.4M1640.8 54.5L1410.1 1436.0M1670.3 59.8L1439.6 1441.3M1685.1 62.5L1454.4 1443.9M1699.8 65.1L1469.1 1446.5M1714.6 67.7L1483.9 1449.2M1729.3 70.4L1498.7 1451.8M1744.1 73.0L1513.4 1454.5M1758.9 75.6L1528.2 1457.1M1773.6 78.3L1542.9 1459.7M1788.4 80.9L1557.7 1462.4M1817.9 86.2L1587.2 1467.6M1832.7 88.8L1602.0 1470.3M1847.4 91.4L1616.7 1472.9M1862.2 94.1L1631.5 1475.5M-44.7 -229.1L1874.1 113.6M-47.5 -212.3L1871.3 130.4M-50.3 -195.4L1868.5 147.3M-53.1 -178.6L1865.7 164.1M-55.9 -161.7L1862.9 181.0M-58.7 -144.9L1860.1 197.8M-61.6 -128.0L1857.2 214.6M-64.4 -111.2L1854.4 231.5M-67.2 -94.3L1851.6 248.3M-72.8 -60.6L1846.0 282.0M-75.6 -43.8L1843.2 298.9M-78.4 -26.9L1840.4 315.7M-81.3 -10.1L1837.5 332.6M-84.1 6.7L1834.7 349.4M-86.9 23.6L1831.9 366.3M-89.7 40.4L1829.1 383.1M-92.5 57.3L1826.3 400.0M-95.3 74.1L1823.5 416.8M-100.9 107.8L1817.9 450.5M-103.8 124.7L1815.0 467.4M-106.6 141.5L1812.2 484.2M-109.4 158.4L1809.4 501.0M-112.2 175.2L1806.6 517.9M-115.0 192.1L1803.8 534.7M-117.8 208.9L1801.0 551.6M-120.6 225.8L1798.2 568.4M-123.4 242.6L1795.4 585.3M-129.1 276.3L1789.7 619.0M-131.9 293.1L1786.9 635.8M-134.7 310.0L1784.1 652.7M-137.5 326.8L1781.3 669.5M-140.3 343.7L1778.5 686.4M-143.1 360.5L1775.7 703.2M-146.0 377.4L1772.8 720.1M-148.8 394.2L1770.0 736.9M-151.6 411.1L1767.2 753.8M-157.2 444.8L1761.6 787.4M-160.0 461.6L1758.8 804.3M-162.8 478.5L1756.0 821.1M-165.6 495.3L1753.2 838.0M-168.5 512.2L1750.3 854.8M-171.3 529.0L1747.5 871.7M-174.1 545.8L1744.7 888.5M-176.9 562.7L1741.9 905.4M-179.7 579.5L1739.1 922.2M-185.3 613.2L1733.5 955.9M-188.1 630.1L1730.7 972.8M-191.0 646.9L1727.8 989.6M-193.8 663.8L1725.0 1006.5M-196.6 680.6L1722.2 1023.3M-199.4 697.5L1719.4 1040.2M-202.2 714.3L1716.6 1057.0M-205.0 731.2L1713.8 1073.8M-207.8 748.0L1711.0 1090.7M-213.5 781.7L1705.3 1124.4M-216.3 798.6L1702.5 1141.2M-219.1 815.4L1699.7 1158.1M-221.9 832.2L1696.9 1174.9M-224.7 849.1L1694.1 1191.8M-227.5 865.9L1691.3 1208.6M-230.3 882.8L1688.5 1225.5M-233.2 899.6L1685.6 1242.3M-236.0 916.5L1682.8 1259.2M-241.6 950.2L1677.2 1292.9M-244.4 967.0L1674.4 1309.7M-247.2 983.9L1671.6 1326.6M-250.0 1000.7L1668.8 1343.4M-252.8 1017.6L1666.0 1360.2M-255.7 1034.4L1663.1 1377.1M-258.5 1051.3L1660.3 1393.9M-261.3 1068.1L1657.5 1410.8M-264.1 1085.0L1654.7 1427.6M-269.7 1118.6L1649.1 1461.3"/><path id="gmaj" d="M31.9 -232.8L-198.7 1148.7M179.5 -206.4L-51.1 1175.0M327.1 -180.1L96.5 1201.4M474.7 -153.7L244.1 1227.8M622.3 -127.3L391.7 1254.1M769.9 -101.0L539.3 1280.5M917.5 -74.6L686.9 1306.8M1065.1 -48.3L834.5 1333.2M1212.7 -21.9L982.1 1359.6M1360.3 4.5L1129.7 1385.9M1507.9 30.8L1277.3 1412.3M1655.5 57.2L1424.9 1438.6M1803.1 83.5L1572.5 1465.0M-41.9 -246.0L1876.9 96.7M-70.0 -77.5L1848.8 265.2M-98.1 91.0L1820.7 433.7M-126.3 259.4L1792.5 602.1M-154.4 427.9L1764.4 770.6M-182.5 596.4L1736.3 939.1M-210.7 764.9L1708.1 1107.5M-238.8 933.3L1680.0 1276.0M-266.9 1101.8L1651.9 1444.5"/>
<radialGradient id="stud" cx="0.38" cy="0.3" r="0.75"><stop offset="0" stop-color="#e8169c"/><stop offset="0.5" stop-color="#cc0c88"/><stop offset="1" stop-color="#720a55"/></radialGradient>
<linearGradient id="rside" x1="853" y1="0" x2="1163" y2="0" gradientUnits="userSpaceOnUse"><stop offset="0" stop-color="#b82636"/><stop offset="0.2" stop-color="#ac1f2d"/><stop offset="0.36" stop-color="#9a1421"/><stop offset="1" stop-color="#96131f"/></linearGradient>
<linearGradient id="pside" x1="0" y1="0" x2="1" y2="0"><stop offset="0" stop-color="#ba2838"/><stop offset="1" stop-color="#9e1826"/></linearGradient>
<linearGradient id="bface" x1="420" y1="950" x2="410.9" y2="1010" gradientUnits="userSpaceOnUse"><stop offset="0" stop-color="#98121f"/><stop offset="0.86" stop-color="#98121f"/><stop offset="0.95" stop-color="#a41c2a"/><stop offset="1" stop-color="#a51d2b"/></linearGradient>
<linearGradient id="legg" x1="577" y1="0" x2="687" y2="0" gradientUnits="userSpaceOnUse"><stop offset="0" stop-color="#97131f"/><stop offset="0.35" stop-color="#a81c2a"/><stop offset="1" stop-color="#b41f2e"/></linearGradient>
<linearGradient id="plateg" x1="620" y1="700" x2="602.6" y2="800" gradientUnits="userSpaceOnUse"><stop offset="0" stop-color="#d8404c"/><stop offset="0.86" stop-color="#d63e4a"/><stop offset="0.95" stop-color="#cc2a3a"/><stop offset="1" stop-color="#c92636"/></linearGradient>
<filter id="blur2" x="-5%" y="-5%" width="110%" height="110%"><feGaussianBlur stdDeviation="2.5"/></filter>
<clipPath id="facesclip">
<path d="M697 304L923.5 408.1L872 720L853.2 826.5L853.2 884L676.7 852.7L676.7 950.4L618 938.5L617 793Z"/>
</clipPath>
<clipPath id="topclip"><path d="M612 210L807.6 245.4L697 304L683.8 382L659 395.1L363.4 341.7Z"/><path d="M697 304L876.6 210L1004.2 210L1163 283.1L923.5 408.1Z"/></clipPath>
<clipPath id="sideclip"><path d="M923.5 408.1L1163 283.1L1154 344.3L940.4 455L904.6 720L892.6 795.8L891 865.9L853.2 884L853.2 826.5L872 720Z"/><path d="M676.7 852.7L714.6 861.5L714.6 930L676.7 950.4Z"/><path d="M617 793L618 938.5L687 945L687 1030L577 1030Z"/><path d="M280.7 985.4L571.8 1029.7L571.8 1032L301 1032Z"/></clipPath>
</defs>
<!-- workplane blue band -->
<path d="M0 379L1575 657.8L1575 676.3L0 397.5Z" fill="#d3eaf2"/>
<!-- grid -->
<use href="#gmin" stroke="#f3d396" stroke-width="1.35" fill="none"/>
<use href="#gmaj" stroke="#eebd60" stroke-width="1.75" fill="none"/>
<!-- shadow -->
<path d="M687 1034L687 926L714 912C790 922 860 944 951 940C1010 940 1090 955 1158 976L1128 1003L1086 1034Z" fill="#b9c2cd" filter="url(#blur2)" style="mix-blend-mode:multiply"/>

<!-- ===== OBJECT ===== -->
<!-- dark strip + leg -->
<path d="M659 395.1L683.8 382L617 793L618 938.5L687 945L687 1030L571.8 1030L557.4 1001Z" fill="url(#legg)"/>
<path d="M659 395.1L683.8 382L617 793L577 1030L571.8 1030L557.4 1001Z" fill="#97131f"/>
<!-- left block top face -->
<path d="M612 210L807.6 245.4L697 304L683.8 382L659 395.1L363.4 341.7Z" fill="#dd1c2b"/>
<path d="M392 327.4L683.8 382L659 395.1L363.4 341.7Z" fill="#e42535"/>
<!-- left block front -->
<path d="M363.4 341.7L659 395.1L557.4 1001L261.1 948.3Z" fill="#d31b29"/>
<!-- left block bottom -->
<path d="M261.1 948.3L557.4 1001L571.8 1030L301 1030Z" fill="url(#bface)"/>
<!-- right block top -->
<path d="M697 304L876.6 210L1004.2 210L1163 283.1L923.5 408.1Z" fill="#de1c2a"/>
<!-- right block side + plate side -->
<path d="M923.5 408.1L1163 283.1L1154 344.3L940.4 455L904.6 720L892.6 795.8L891 865.9L853.2 884L853.2 826.5L872 720Z" fill="url(#rside)"/>
<!-- plate front -->
<path d="M697 304L923.5 408.1L872 720L853.2 826.5L853.2 884L676.7 852.7L676.7 950.4L618 938.5L617 793Z" fill="url(#plateg)"/>
<!-- notch side -->
<path d="M676.7 852.7L714.6 861.5L714.6 930L676.7 950.4Z" fill="#a3192a"/>

<!-- grid texture on faces -->
<g clip-path="url(#facesclip)">
<use href="#gmin" stroke="#cc2a0c" stroke-width="1.3" fill="none" opacity="0.3"/>
<use href="#gmaj" stroke="#cc2a0c" stroke-width="1.7" fill="none" opacity="0.55"/>
</g>
<g clip-path="url(#topclip)">
<use href="#gmin" stroke="#b40a10" stroke-width="1.3" fill="none" opacity="0.3"/>
<use href="#gmaj" stroke="#b40a10" stroke-width="1.7" fill="none" opacity="0.5"/>
</g>
<g clip-path="url(#sideclip)">
<use href="#gmin" stroke="#7a0a10" stroke-width="1.2" fill="none" opacity="0.2"/>
<use href="#gmaj" stroke="#7a0a10" stroke-width="1.5" fill="none" opacity="0.32"/>
</g>

<!-- slots -->
<g fill="none" stroke-linejoin="miter">
<path d="M670 478L741 489.5L744 528L822 540.5L835 507L914 520.5" stroke="#4b5a6c" stroke-width="10"/>
<path d="M670 478L741 489.5L744 528L822 540.5L835 507L914 520.5" stroke="#d42838" stroke-width="7"/>
<g transform="translate(-28 168.5)">
<path d="M670 478L741 489.5L744 528L822 540.5L835 507L914 520.5" stroke="#4b5a6c" stroke-width="10"/>
<path d="M670 478L741 489.5L744 528L822 540.5L835 507L914 520.5" stroke="#d42838" stroke-width="7"/>
</g>
</g>

<!-- edges -->
<g fill="none" stroke="#485a70" stroke-width="1.5" stroke-linejoin="round">
<path d="M363.4 341.7L612 210L807.6 245.4"/>
<path d="M363.4 341.7L659 395.1L683.8 382"/>
<path d="M392 327.4L683.8 382"/>
<path d="M363.4 341.7L261.1 948.3L557.4 1001L659 395.1"/>
<path d="M261.1 948.3L301 1032M557.4 1001L571.8 1032"/>
<path d="M697 304L880 208M1000 208L1163 283.1L1154 344.3L940.4 455"/>
<path d="M923.5 408.1L1163 283.1"/>
<path d="M697 304L923.5 408.1M940.4 455L904.6 720L892.6 795.8L891 865.9L853.2 884"/>
<path d="M697 304L617 793L618 938.5L676.7 950.4L676.7 852.7L853.2 884L853.2 826.5L872 720L923.5 408.1"/>
<path d="M676.7 950.4L714.6 930L714.6 861.5"/>
<path d="M687 945L687 1032" stroke-width="1"/>
<path d="M659.6 440L659.6 527" stroke-width="1.2"/>
</g>

<!-- studs -->
<g fill="#4b4a6e" opacity="0.85"><circle cx="713.7" cy="336.8" r="11.5"/><circle cx="897.4" cy="421.3" r="11.5"/><circle cx="694.7" cy="455.6" r="11.5"/><circle cx="685.5" cy="510.8" r="11.5"/><circle cx="886.4" cy="489.3" r="11.5"/><circle cx="877.3" cy="545.0" r="11.5"/><circle cx="666.1" cy="626.6" r="11.5"/><circle cx="657.8" cy="677.2" r="11.5"/><circle cx="857.9" cy="661.1" r="11.5"/><circle cx="849.6" cy="710.9" r="11.5"/><circle cx="830.7" cy="863.7" r="9.3"/><circle cx="638.9" cy="922.0" r="9"/></g>
<g fill="url(#stud)">
<circle cx="715" cy="335.5" r="11.5"/><circle cx="898.7" cy="420" r="11.5"/>
<circle cx="696" cy="454.3" r="11.5"/><circle cx="686.8" cy="509.5" r="11.5"/>
<circle cx="887.7" cy="488" r="11.5"/><circle cx="878.6" cy="543.7" r="11.5"/>
<circle cx="667.4" cy="625.3" r="11.5"/><circle cx="659.1" cy="675.9" r="11.5"/>
<circle cx="859.2" cy="659.8" r="11.5"/><circle cx="850.9" cy="709.6" r="11.5"/>
<circle cx="832" cy="862.4" r="9.3"/><circle cx="640.2" cy="920.7" r="9"/>
</g>
</svg>

<svg class="abs" style="left:25px;top:35px" width="105" height="115" viewBox="25 245 105 115">
<defs><linearGradient id="cubef" x1="0" y1="0" x2="0" y2="1"><stop offset="0" stop-color="#fafafa" stop-opacity=".55"/><stop offset="1" stop-color="#d8d8d8" stop-opacity=".85"/></linearGradient>
<linearGradient id="cubes" x1="0" y1="0" x2="0" y2="1"><stop offset="0" stop-color="#f4f4f4" stop-opacity=".5"/><stop offset="1" stop-color="#d2d2d2" stop-opacity=".85"/></linearGradient></defs>
<path d="M35 329.4L91.7 346.7L119.4 322L119.4 319.4L92.8 340.6L32.8 322.8Z" fill="#b8b8b8" opacity=".8"/>
<path d="M29.4 258.3L94.4 265.6L92.8 340.6L32.8 322.8Z" fill="url(#cubef)" stroke="#a8a8a8" stroke-width="1.1"/>
<path d="M94.4 265.6L123.3 253.9L119.4 319.4L92.8 340.6Z" fill="url(#cubes)" stroke="#a8a8a8" stroke-width="1.1"/>
<path d="M29.4 258.3L68.3 248.9L123.3 253.9L94.4 265.6Z" fill="#fbfbfb" fill-opacity=".5" stroke="#a8a8a8" stroke-width="1.1"/>
<text x="42.2" y="303.5" font-family="Liberation Sans" font-weight="bold" font-size="17.5" fill="#8e9398" transform="rotate(8 42.2 303.5)" textLength="39.5" lengthAdjust="spacingAndGlyphs">RIGHT</text>
<text x="0" y="0" font-family="Liberation Sans" font-weight="bold" font-style="italic" font-size="9.5" fill="#8e9398" transform="translate(102 313) rotate(-70) skewX(-15)" textLength="24" lengthAdjust="spacingAndGlyphs">BACK</text>
<path d="M72 260l6-2M74 257l2 1" stroke="#999" stroke-width="1"/>
</svg>
<div class="navc" style="top:160px"></div>
<svg class="abs" style="left:33px;top:171px" width="22" height="22" viewBox="0 0 22 22"><path d="M3 11L11 3.5 19 11M5.5 9v10h3.5v-6h4v6h3.5V9" stroke="#8a8a8a" stroke-width="1.3" fill="none"/></svg>
<div class="navc" style="top:212px"></div>
<svg class="abs" style="left:33px;top:223px" width="22" height="22" viewBox="0 0 22 22"><path d="M2 7V2h5M15 2h5v5M20 15v5h-5M7 20H2v-5" stroke="#8a8a8a" stroke-width="1.5" fill="none"/></svg>
<div class="navc" style="top:264px"></div>
<svg class="abs" style="left:33px;top:275px" width="22" height="22" viewBox="0 0 22 22"><path d="M11 3v16M3 11h16" stroke="#8a8a8a" stroke-width="2" fill="none"/></svg>
<div class="navc" style="top:317px"></div>
<svg class="abs" style="left:33px;top:328px" width="22" height="22" viewBox="0 0 22 22"><path d="M3 11h16" stroke="#8a8a8a" stroke-width="2" fill="none"/></svg>
<div class="navc" style="top:369px"></div>
<svg class="abs" style="left:32px;top:379px" width="24" height="24" viewBox="0 0 24 24"><g stroke="#8a8a8a" stroke-width="1.1" fill="none"><path d="M6 8h9v10H6zM6 8l3-3h9l-3 3M18 5v10l-3 3"/><path d="M2 20.5h20"/></g></svg>
<div class="abs" style="left:1450px;top:741px;width:112px;height:26px;border:1px solid #d6dbe2;border-radius:3px;background:rgba(255,255,255,.55);font-size:15.3px;line-height:24px;color:#6b7b8b;text-align:center">Edit Grid</div>
<div class="abs" style="left:1396px;top:786px;font-size:15px;line-height:18px;color:#3e4e60">Snap Grid</div>
<div class="abs" style="left:1473px;top:781px;width:89px;height:26px;border:1px solid #d6dbe2;border-radius:3px;background:rgba(255,255,255,.55);font-size:14.5px;line-height:24px;color:#5b6b7b;padding-left:10px">0.1 mm</div>
<svg class="abs" style="left:1542px;top:791px" width="8" height="5" viewBox="0 0 8 5"><path d="M0 5h8L4 0z" fill="#333"/></svg>


</div>

<!-- ============ RIGHT PANEL ============ -->
<div id="panel">
<svg class="abs" style="left:35px;top:17px" width="44" height="46" viewBox="0 0 44 46"><g stroke="#1a8cc4" fill="none"><path d="M1.5 2.5L43 0.5L42.5 45L3 42z" stroke-width="2.6" stroke-linejoin="round"/><g stroke-width="1.4"><path d="M9.5 2.2L10.5 42.5M17 1.8L17.8 43M25 1.5L24.8 43.5M33 1.2L32.5 44M37.8 1L37.3 44.5"/><path d="M2 9.5L42.8 7.6M2.2 16.5L42.8 15M2.4 23L42.7 22.5M2.6 30L42.7 30M2.8 37L42.6 37.5"/></g><path d="M25 1.5L24.8 43.5M2.4 23L42.7 22.5" stroke-width="2"/></g></svg>
<div class="plabel" style="left:20px;top:71px;width:75px;font-size:15.5px">Workplane</div>
<svg class="abs" style="left:150px;top:19px" width="45" height="45" viewBox="0 0 45 45"><g stroke="#1a8cc4" fill="none" stroke-linejoin="round"><path d="M1.5 1.8L11.5 1.3L12.5 30.5L42.5 33L43.5 43.5L3.5 40z" stroke-width="2.6"/><path d="M7 8h4M8 14h3M8 20h3.5M8 26h3M13 36.5V41M21 37v3M28 37.5v3.5M35 38v3" stroke-width="1.5"/></g></svg>
<div class="plabel" style="left:140px;top:71px;width:65px;font-size:15.2px">Ruler</div>
<svg class="abs" style="left:268px;top:17px" width="37" height="46" viewBox="0 0 37 46"><path d="M6 1.5h25a4.5 4.5 0 0 1 4.5 4.5v23a4.5 4.5 0 0 1-4.5 4.5h-6L18.5 44 12 33.5H6A4.5 4.5 0 0 1 1.5 29V6A4.5 4.5 0 0 1 6 1.5z" stroke="#1a8cc4" stroke-width="2.6" fill="none" stroke-linejoin="round"/><path d="M9 11h17M9 15.5h17M9 20h16M9 24.5h11" stroke="#1a8cc4" stroke-width="1.6"/></svg>
<div class="plabel" style="left:255px;top:71px;width:65px;font-size:15.2px">Notes</div>
<div class="abs" style="left:0;top:98px;width:345px;height:1px;background:#dcdfe4"></div>
<div class="abs" style="left:6px;top:108px;width:332px;height:77px;border:1px solid #e1e3e8;border-radius:3px;background:#f2f2f5;box-shadow:0 2px 4px rgba(0,0,0,.10)"></div>
<div class="abs" style="left:20px;top:120px;font-size:14.2px;color:#4a596b">Tinkercad</div>
<div class="abs" style="left:20px;top:147px;font-size:18.6px;color:#3e4e60">Basic Shapes</div>
<svg class="abs" style="left:303px;top:143px" width="13" height="8" viewBox="0 0 13 8"><path d="M0 0h13L6.5 7.5z" fill="#111"/></svg>
<div class="abs" style="left:6px;top:198px;width:332px;height:1px;background:#dcdfe4"></div>
<!-- shapes -->
<div class="abs" style="left:20px;top:246px;width:110px;height:80px;border-radius:50%;background:radial-gradient(closest-side,rgba(0,0,0,.10),rgba(0,0,0,0))"></div>
<div class="abs" style="left:177px;top:240px;width:110px;height:80px;border-radius:50%;background:radial-gradient(closest-side,rgba(0,0,0,.10),rgba(0,0,0,0))"></div>
<svg class="abs" style="left:40px;top:265px" width="100" height="100" viewBox="1615 475 100 100"><path d="M1621.5 482L1695 493.3L1692.5 555.4L1626.3 540.9Z" fill="#2b3a78" stroke="#1e2a5c" stroke-width="1.3"/><path d="M1695 493.3L1708.7 516.7L1692.5 555.4Z" fill="#30498f" stroke="#1e2a5c" stroke-width="1.3"/></svg>
<div class="plabel" style="left:44px;top:356px;width:100px">Wedge</div>
<svg class="abs" style="left:200px;top:255px" width="100" height="100" viewBox="1775 465 100 100"><path d="M1825.4 471.5L1783 541L1847.5 555.4Z" fill="#dcbb18" stroke="#8a7a10" stroke-width="1.5" stroke-linejoin="round"/><path d="M1825.4 471.5L1864.5 517.5L1847.5 555.4Z" fill="#f2d41e" stroke="#8a7a10" stroke-width="1.5" stroke-linejoin="round"/><path d="M1825.4 471.5L1847.5 555.4" stroke="#a89212" stroke-width="1"/></svg>
<div class="plabel" style="left:200px;top:356px;width:100px">Pyramid</div>
<div class="abs" style="left:20px;top:430px;width:110px;height:80px;border-radius:50%;background:radial-gradient(closest-side,rgba(0,0,0,.09),rgba(0,0,0,0))"></div>
<div class="abs" style="left:177px;top:425px;width:110px;height:80px;border-radius:50%;background:radial-gradient(closest-side,rgba(0,0,0,.09),rgba(0,0,0,0))"></div>
<svg class="abs" style="left:55px;top:460px" width="80" height="65" viewBox="1630 670 80 65"><path d="M1636 710C1636 688 1652 674.5 1670 674.5C1689 674.5 1704 690 1703.5 711C1703 722 1690 730 1669 730C1650 730 1636 722 1636 710Z" fill="url(#hsg)" stroke="#7a0a50" stroke-width="1"/><defs><radialGradient id="hsg" cx="0.7" cy="0.3" r="0.8"><stop offset="0" stop-color="#ea1aa0"/><stop offset="0.6" stop-color="#d20c88"/><stop offset="1" stop-color="#8e0a5e"/></radialGradient></defs></svg>
<div class="plabel" style="left:44px;top:549px;width:100px">Half Sphere</div>
<svg class="abs" style="left:210px;top:432px" width="80" height="105" viewBox="1785 642 80 105"><path d="M1789.4 655.8L1818.5 646.1L1854 651L1862.8 668L1833 681.7L1792.6 675.2Z" fill="#34509a" stroke="#1c2a5a" stroke-width="1.3" stroke-linejoin="round"/><path d="M1792.6 675.2L1833 681.7L1833 745.4L1797.5 738.2L1789.4 655.8Z" fill="#2b3d7c" stroke="#1c2a5a" stroke-width="1.3" stroke-linejoin="round"/><path d="M1833 681.7L1862.8 668L1859.6 730L1833 745.4Z" fill="#344f95" stroke="#1c2a5a" stroke-width="1.3" stroke-linejoin="round"/></svg>
<div class="plabel" style="left:200px;top:549px;width:100px">Polygon</div>
<div class="abs" style="left:20px;top:615px;width:110px;height:80px;border-radius:50%;background:radial-gradient(closest-side,rgba(0,0,0,.09),rgba(0,0,0,0))"></div>
<div class="abs" style="left:177px;top:622px;width:110px;height:80px;border-radius:50%;background:radial-gradient(closest-side,rgba(0,0,0,.09),rgba(0,0,0,0))"></div>
<svg class="abs" style="left:55px;top:640px" width="80" height="90" viewBox="1630 850 80 90"><path d="M1669.5 855.5C1660 855.5 1652 868 1645 888C1639 905 1636 913 1636.5 920C1637 930 1650 936.5 1669.5 936.5C1689 936.5 1702.5 930 1703 920C1703.5 912 1700 905 1694 888C1687 868 1679 855.5 1669.5 855.5Z" fill="url(#pbg)" stroke="#767a7c" stroke-width="1.3"/><defs><linearGradient id="pbg" x1="0" y1="0" x2="1" y2="0"><stop offset="0" stop-color="#9ea2a4"/><stop offset="0.3" stop-color="#c8cccd"/><stop offset="0.6" stop-color="#dfe3e5"/><stop offset="1" stop-color="#cfd3d5"/></linearGradient></defs></svg>
<div class="plabel" style="left:44px;top:742px;width:100px">Paraboloid</div>
<svg class="abs" style="left:210px;top:650px" width="80" height="55" viewBox="1785 860 80 55"><ellipse cx="1825.2" cy="888.7" rx="35" ry="24" fill="url(#tg)" stroke="#0a5f88" stroke-width="1"/><ellipse cx="1824.2" cy="888.5" rx="16.5" ry="5.2" fill="#e6e8ea" stroke="#087aa8" stroke-width="1.5"/><defs><radialGradient id="tg" cx="0.55" cy="0.35" r="0.7"><stop offset="0" stop-color="#16b2ea"/><stop offset="0.7" stop-color="#0d97d0"/><stop offset="1" stop-color="#0a7cb0"/></radialGradient></defs></svg>
<div class="plabel" style="left:200px;top:742px;width:100px">Torus</div>
<div class="abs" style="left:328px;top:456px;width:10px;height:169px;border-radius:5px;background:#cdd0d5"></div>

</div>

<div class="abs" style="left:1563px;top:592px;width:20px;height:58px;border:1px solid #d4d8de;border-right:none;background:#f2f2f4"></div>
<svg class="abs" style="left:1569px;top:607px" width="11" height="29" viewBox="0 0 11 29"><path d="M1.5 1.5L9.5 14.5 1.5 27.5" stroke="#111" stroke-width="2.6" fill="none"/></svg>
<!-- ============ TASKBAR ============ -->
<div id="taskbar">
<div class="abs" style="left:0;top:0;width:60px;height:50px;background:#1f1b18"></div>
<svg class="abs" style="left:19px;top:15px" width="22" height="21" viewBox="0 0 22 21"><path d="M0 3l9-1.3V10H0zM10 1.5L22 0v10H10zM0 11h9v8.3L0 18zM10 11h12v10l-12-1.6z" fill="#fff"/></svg>
<div class="abs" style="left:60px;top:0;width:430px;height:50px;background:#f0f0f0;border-top:1px solid #c8c8c8"></div>
<svg class="abs" style="left:74px;top:14px" width="22" height="22" viewBox="0 0 22 22"><circle cx="13.5" cy="8.5" r="7" stroke="#111" stroke-width="1.6" fill="none"/><path d="M8.5 13.5L1 21" stroke="#111" stroke-width="1.8"/></svg>
<div class="abs" style="left:110px;top:13px;font-size:18.4px;line-height:24px;color:#1b1b1b">Type here to search</div>
<div class="abs" style="left:510px;top:15px;width:20px;height:20px;border-radius:50%;border:2.6px solid #fff"></div>
<svg class="abs" style="left:569px;top:13px" width="22" height="22" viewBox="0 0 22 22"><g stroke="#fff" stroke-width="1.5" fill="none"><rect x="1" y="6" width="13" height="10"/><path d="M1 2.5h13M1 19.5h13M19.5 1v4M19.5 8v6M19.5 17v4"/></g></svg>
<svg class="abs" style="left:629px;top:13px" width="30" height="26" viewBox="0 0 30 26"><path d="M0 2a2 2 0 0 1 2-2h8l3 3h15a2 2 0 0 1 2 2v3H0z" fill="#e8a91c"/><path d="M0 6h30v18a2 2 0 0 1-2 2H2a2 2 0 0 1-2-2z" fill="#f7c84a"/><rect x="8" y="14" width="14" height="10" fill="#2c8ad8"/><rect x="11" y="17" width="8" height="7" fill="#f7c84a"/></svg>
<div class="abs" style="left:619px;top:47px;width:51px;height:3px;background:#76b9ed"></div>
<svg class="abs" style="left:690px;top:10px" width="31" height="32" viewBox="0 0 31 32"><path d="M9 9V6a6.5 6.5 0 0 1 13 0v3" stroke="#fff" stroke-width="2" fill="none"/><rect x="0" y="9" width="31" height="23" rx="1" fill="#f4f4f4"/><rect x="9" y="15" width="6" height="6" fill="#f25022"/><rect x="16" y="15" width="6" height="6" fill="#7fba00"/><rect x="9" y="22" width="6" height="6" fill="#00a4ef"/><rect x="16" y="22" width="6" height="6" fill="#ffb900"/></svg>
<svg class="abs" style="left:753px;top:11px" width="29" height="29" viewBox="0 0 29 29"><circle cx="14.5" cy="14.5" r="14.5" fill="#1b3e74"/><circle cx="14.5" cy="14.5" r="13" fill="url(#stg)"/><defs><linearGradient id="stg" x1="0" y1="0" x2="0" y2="1"><stop offset="0" stop-color="#1a4a8a"/><stop offset="1" stop-color="#0e2450"/></linearGradient></defs><circle cx="19" cy="10.5" r="4.3" stroke="#fff" stroke-width="1.6" fill="none"/><circle cx="10" cy="19" r="3" stroke="#fff" stroke-width="1.5" fill="none"/><path d="M1 15l8 3M12 18l5-4" stroke="#fff" stroke-width="2.2"/></svg>
<svg class="abs" style="left:814px;top:9px" width="32" height="32" viewBox="0 0 32 32"><path d="M3 3l10 5h6l10-5v26H3z" fill="#1b1e22"/><path d="M3 3l5 8v14l-5 4z" fill="#2b7fa6"/><path d="M29 3l-5 8v14l5 4z" fill="#2b7fa6"/><path d="M10 12l6 7 6-7-2 11h-8z" fill="#5b6066"/></svg>
<svg class="abs" style="left:876px;top:9px" width="45" height="36" viewBox="0 0 45 36"><path d="M2 14L16 3l14 11v16H2z" fill="#0f6cbd"/><path d="M2 14l14 9 14-9v16H2z" fill="#2e9ae8"/><path d="M6 12V6h20v6l-10 7z" fill="#fff"/><circle cx="34" cy="25" r="10.5" fill="#2c2520" stroke="#bbb" stroke-width="1"/><text x="34" y="31" font-size="15" font-weight="bold" fill="#fff" text-anchor="middle" font-family="Liberation Sans">55</text></svg>
<div class="abs" style="left:924px;top:0;width:61px;height:50px;background:#4a4541"></div>
<svg class="abs" style="left:939px;top:10px" width="30" height="30" viewBox="0 0 30 30"><circle cx="15" cy="15" r="14.5" fill="#fbc116"/><path d="M15 .5A14.5 14.5 0 0 1 27.6 7.7H15z" fill="#e33b2e"/><path d="M2.4 7.8A14.5 14.5 0 0 1 15 .5V8.5A6.5 6.5 0 0 0 9.4 11.8z" fill="#e33b2e"/><path d="M2.4 7.8L9.4 18.2A6.5 6.5 0 0 0 15 21.5L8.8 29A14.5 14.5 0 0 1 2.4 7.8z" fill="#109d58"/><circle cx="15" cy="15" r="6.5" fill="#fff"/><circle cx="15" cy="15" r="5" fill="#4a8af4"/></svg>
<div class="abs" style="left:924px;top:47px;width:61px;height:3px;background:#76b9ed"></div>
<div class="abs" style="left:1001px;top:10px;width:30px;height:30px;background:linear-gradient(135deg,#fde8d2,#f3c9a4)"></div>
<svg class="abs" style="left:1001px;top:10px" width="30" height="30" viewBox="0 0 30 30"><path d="M9 5h12l-2 5h-5v3h5l-2 4h-3v8H9z" fill="#e8861c"/><text x="22" y="27" font-size="5" fill="#e8861c" font-family="Liberation Sans">360</text></svg>
<svg class="abs" style="left:1064px;top:10px" width="28" height="28" viewBox="0 0 28 28"><circle cx="14" cy="14" r="14" fill="#15989a"/><g stroke="#fff" stroke-width="2" fill="none"><ellipse cx="9.5" cy="14" rx="4.5" ry="3.8"/><ellipse cx="18.5" cy="14" rx="4.5" ry="3.8"/></g></svg>
<svg class="abs" style="left:1126px;top:10px" width="28" height="28" viewBox="0 0 28 28"><rect width="28" height="28" rx="8" fill="#2d8cff"/><rect x="5" y="9" width="13" height="10" rx="2" fill="#fff"/><path d="M19 12.5l5-3v9l-5-3z" fill="#fff"/></svg>
<svg class="abs" style="left:1188px;top:10px" width="28" height="29" viewBox="0 0 28 29"><rect width="28" height="29" fill="#28a6ea"/><circle cx="19" cy="6.5" r="2.8" fill="#fff"/><path d="M0 29V17l9-7 19 15v4z" fill="#1b4f98"/><path d="M14 14l6-4 8 8v11H18z" fill="#7188d8"/><path d="M0 29V19l9-6 13 16z" fill="#183e7e"/></svg>
<div class="abs" style="left:1177px;top:47px;width:50px;height:3px;background:#76b9ed"></div>
<svg class="abs" style="left:1513px;top:20px" width="18" height="11" viewBox="0 0 18 11"><path d="M1 10L9 1.5 17 10" stroke="#fff" stroke-width="1.5" fill="none"/></svg>
<svg class="abs" style="left:1545px;top:15px" width="16" height="21" viewBox="0 0 16 21"><g stroke="#fff" stroke-width="1.3" fill="none"><rect x="1" y="6" width="9" height="9" rx="1.5"/><path d="M10 9l4-2v7l-4-2"/><path d="M3 3q5-3 10 0M3 18q5 3 10 0"/></g></svg>
<svg class="abs" style="left:1571px;top:19px" width="22" height="13" viewBox="0 0 22 13"><path d="M5 13a5 5 0 0 1-.5-10A6.5 6.5 0 0 1 17 4a4.5 4.5 0 0 1 .5 9z" fill="#eee"/></svg>
<svg class="abs" style="left:1602px;top:19px" width="21" height="12" viewBox="0 0 21 12"><rect x="1" y="1" width="17" height="10" stroke="#fff" stroke-width="1.3" fill="none"/><rect x="3" y="3" width="5" height="6" fill="#fff"/><rect x="18.5" y="4" width="2" height="4" fill="#fff"/></svg>
<svg class="abs" style="left:1634px;top:16px" width="17" height="17" viewBox="0 0 17 17"><g stroke="#fff" stroke-width="1.3" fill="none"><path d="M1 16A15 15 0 0 1 16 1M4.5 16A11.5 11.5 0 0 1 16 4.5M8 16A8 8 0 0 1 16 8"/></g><circle cx="15" cy="15" r="1.6" fill="#fff"/></svg>
<svg class="abs" style="left:1661px;top:14px" width="22" height="20" viewBox="0 0 22 20"><path d="M1 7h4l5-5v16l-5-5H1z" stroke="#fff" stroke-width="1.3" fill="none"/><path d="M13 7q2 3 0 6M16 4.5q4 5.5 0 11M19 2q6 8 0 16" stroke="#fff" stroke-width="1.3" fill="none"/></svg>
<svg class="abs" style="left:1691px;top:12px" width="21" height="25" viewBox="0 0 21 25"><g fill="#fff"><path d="M5 0l5 3-5 3-5-3zM15 0l5 3-5 3-5-3zM5 6l5 3-5 3-5-3zM15 6l5 3-5 3-5-3z"/></g><rect x="0" y="13" width="12" height="12" rx="1.5" fill="#d7141e"/><text x="6" y="23" font-size="10" font-weight="bold" fill="#fff" text-anchor="middle" font-family="Liberation Sans">3</text></svg>
<div class="abs" style="left:1725px;top:16px;font-size:14px;line-height:18px;color:#fff">ENG</div>
<div class="abs" style="left:1771px;top:5px;width:75px;text-align:center;font-size:13.8px;line-height:18px;color:#fff">16:16</div>
<div class="abs" style="left:1768px;top:28px;width:81px;text-align:center;font-size:14.8px;line-height:18px;color:#fff">18/04/2021</div>
<svg class="abs" style="left:1868px;top:10px" width="36" height="36" viewBox="0 0 36 36"><path d="M1 2h21v14H9l-4 4v-4H1z" fill="#fff"/><path d="M5 6h13M5 9h13M5 12h9" stroke="#2c2520" stroke-width="1"/><circle cx="20" cy="24.5" r="10.3" fill="#2c2520" stroke="#aaa" stroke-width="1"/><text x="20" y="30" font-size="15" font-weight="bold" fill="#fff" text-anchor="middle" font-family="Liberation Sans">21</text></svg>

</div>
</body></html>
